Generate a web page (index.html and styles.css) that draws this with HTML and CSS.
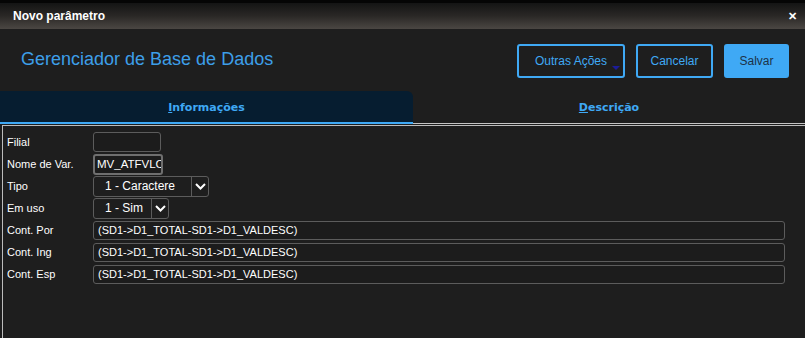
FILE: index.html
```html
<!DOCTYPE html>
<html lang="pt-BR">
<head>
    <meta charset="UTF-8">
    <title>Novo parâmetro</title>
    <link rel="stylesheet" href="styles.css">
</head>
<body>
    <div class="top-strip"></div>

    <div class="titlebar">
        <span class="titlebar-text">Novo parâmetro</span>
        <span class="close">&#x2715;</span>
    </div>

    <div class="header">
        <h1 class="header-title">Gerenciador de Base de Dados</h1>
        <div class="actions">
            <button class="btn btn-more">Outras Ações<span class="caret"></span></button>
            <button class="btn">Cancelar</button>
            <button class="btn btn-primary">Salvar</button>
        </div>
    </div>

    <div class="tabs">
        <div class="tab active"><u>I</u>nformações</div>
        <div class="tab"><u>D</u>escrição</div>
    </div>

    <div class="panel">
        <div class="row">
            <label>Filial</label>
            <div class="field field-filial"></div>
        </div>
        <div class="row">
            <label>Nome de Var.</label>
            <div class="field field-nome">MV_ATFVLC</div>
        </div>
        <div class="row">
            <label>Tipo</label>
            <div class="select select-tipo">
                <span class="select-value">1 - Caractere</span>
                <span class="select-arrow">
                    <svg width="11" height="7" viewBox="0 0 11 7"><path d="M1 1 L5.5 5.5 L10 1" fill="none" stroke="#fff" stroke-width="2"/></svg>
                </span>
            </div>
        </div>
        <div class="row">
            <label>Em uso</label>
            <div class="select select-uso">
                <span class="select-value">1 - Sim</span>
                <span class="select-arrow">
                    <svg width="11" height="7" viewBox="0 0 11 7"><path d="M1 1 L5.5 5.5 L10 1" fill="none" stroke="#fff" stroke-width="2"/></svg>
                </span>
            </div>
        </div>
        <div class="row">
            <label>Cont. Por</label>
            <div class="field field-wide">(SD1-&gt;D1_TOTAL-SD1-&gt;D1_VALDESC)</div>
        </div>
        <div class="row">
            <label>Cont. Ing</label>
            <div class="field field-wide">(SD1-&gt;D1_TOTAL-SD1-&gt;D1_VALDESC)</div>
        </div>
        <div class="row">
            <label>Cont. Esp</label>
            <div class="field field-wide">(SD1-&gt;D1_TOTAL-SD1-&gt;D1_VALDESC)</div>
        </div>
    </div>
</body>
</html>
```

FILE: styles.css
```css
* {
    margin: 0;
    padding: 0;
    box-sizing: border-box;
}

body {
    width: 805px;
    height: 338px;
    background: #1e1e1e;
    overflow: hidden;
    font-family: 'Liberation Sans', Arial, sans-serif;
    color: #fff;
}

.top-strip {
    height: 3px;
    background: #050505;
}

.titlebar {
    height: 26px;
    display: flex;
    align-items: center;
    justify-content: space-between;
    padding: 0 8px 0 13px;
    background: linear-gradient(to bottom, #141414 0%, #2a2826 50%, #4b4743 100%);
}

.titlebar-text {
    font-size: 12px;
    font-weight: bold;
    color: #fff;
}

.close {
    font-size: 11px;
    font-weight: bold;
    color: #fff;
}

.header {
    height: 62px;
    display: flex;
    align-items: center;
    justify-content: space-between;
    padding: 0 16px 0 21px;
    background: #1e1e1e;
}

.header-title {
    font-size: 18px;
    font-weight: normal;
    color: #3d9fe9;
    margin-top: -1px;
}

.actions {
    display: flex;
    gap: 11px;
    margin-top: 1px;
}

.btn {
    position: relative;
    height: 34px;
    border: 2px solid #3fa9f5;
    border-radius: 3px;
    background: transparent;
    color: #3fa9f5;
    font-family: 'Liberation Sans', Arial, sans-serif;
    font-size: 12px;
}

.btn-more { width: 108px; }
.btn:nth-child(2) { width: 77px; }

.btn-primary {
    width: 65px;
    background: #3fa9f5;
    color: #1d3247;
}

.caret {
    position: absolute;
    right: 3px;
    bottom: 6px;
    width: 0;
    height: 0;
    border-left: 4px solid transparent;
    border-right: 4px solid transparent;
    border-top: 4px solid #1c1c9a;
}

.tabs {
    display: grid;
    grid-template-columns: 413px 1fr;
    height: 33px;
    border-bottom: 1px solid #c4c4c4;
}

.tab {
    display: flex;
    align-items: center;
    justify-content: center;
    font-family: 'DejaVu Sans', Verdana, sans-serif;
    font-size: 11px;
    font-weight: bold;
    color: #3fa9f5;
    padding-top: 1px;
}

.tab.active {
    background: #061d30;
    border-radius: 0 6px 0 0;
    border-bottom: 2px solid #3fa9f5;
    margin-bottom: -1px;
}

.panel {
    margin: 1px 0 0 2px;
    border-top: 1px solid #bcbcbc;
    border-left: 1px solid #bcbcbc;
    padding: 5px 0 0 4px;
    height: 213px;
}

.row {
    display: flex;
    align-items: center;
    height: 22px;
}

.row label {
    width: 86px;
    font-size: 11px;
    color: #fff;
}

.field {
    height: 20px;
    border: 1px solid #5c5c5c;
    border-radius: 3px;
    background: #1c1c1c;
    font-size: 11px;
    line-height: 18px;
    padding: 0 4px;
    white-space: nowrap;
    overflow: hidden;
    color: #fff;
}

.field-filial { width: 68px; margin-top: -1px; }

.field-nome {
    width: 70px;
    height: 21px;
    padding: 0 2px;
    border: 2px solid #6f6f6f;
    line-height: 17px;
    font-size: 11.5px;
}

.field-wide {
    width: 692px;
    height: 19px;
    line-height: 17px;
    padding: 0 4px;
}

.select {
    display: flex;
    height: 21px;
    border: 1px solid #5c5c5c;
    border-radius: 3px;
    font-size: 12px;
}

.select-tipo { width: 116px; }
.select-uso { width: 76px; }

.select-value {
    flex: 1;
    display: flex;
    align-items: center;
    padding-left: 11px;
}

.select-arrow {
    width: 17px;
    display: flex;
    align-items: center;
    justify-content: center;
    border-left: 1px solid #5c5c5c;
}
```
